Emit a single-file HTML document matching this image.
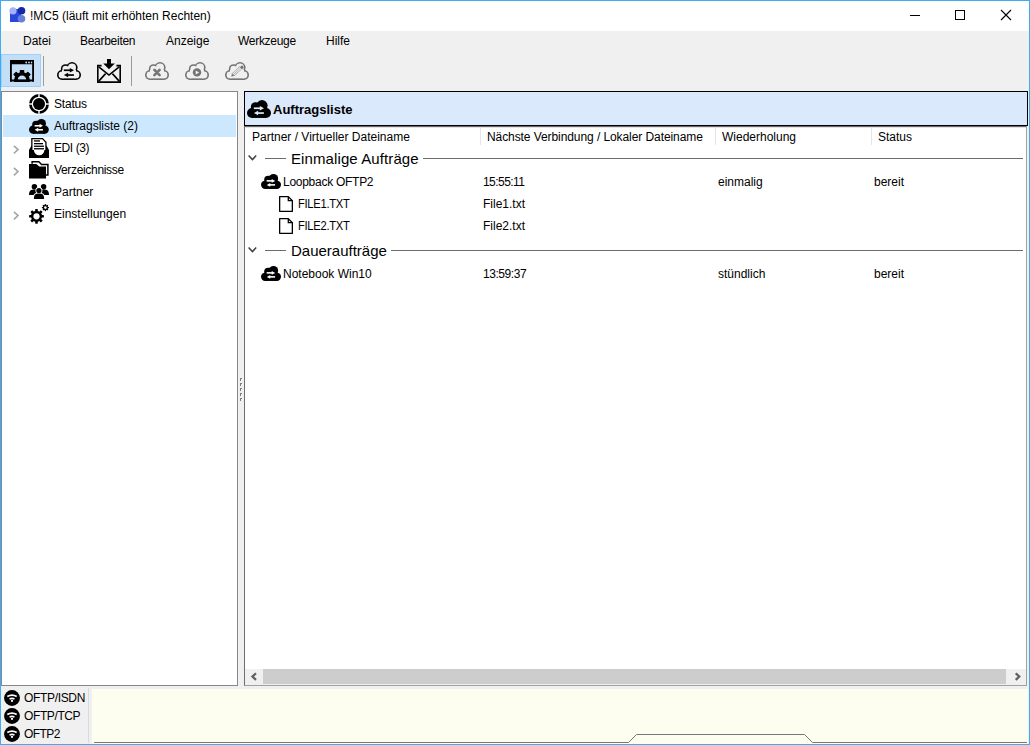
<!DOCTYPE html>
<html><head><meta charset="utf-8">
<style>
html,body{margin:0;padding:0;}
body{width:1030px;height:745px;position:relative;overflow:hidden;background:#f0f0f0;font-family:"Liberation Sans",sans-serif;font-size:12px;color:#000;}
.a{position:absolute;}
.t{position:absolute;white-space:nowrap;font-size:12px;line-height:14px;}
.g{position:absolute;white-space:nowrap;font-size:15px;line-height:17px;}
svg{position:absolute;overflow:visible;}
</style></head><body>

<div class="a" style="left:1px;top:1px;width:1028px;height:30px;background:#fff;"></div>
<svg style="left:9px;top:7px" width="17" height="16" viewBox="0 0 17 16">
  <rect x="1" y="2" width="11" height="13" fill="#2b46dc"/>
  <circle cx="12.5" cy="3.8" r="3.8" fill="#1428a8"/>
  <circle cx="12.5" cy="11.7" r="3.8" fill="#6a7fd8"/>
  <circle cx="4" cy="3.8" r="3.6" fill="#a4b2fc"/>
</svg>
<div class="t" style="left:30px;top:9px;">!MC5 (läuft mit erhöhten Rechten)</div>
<div class="a" style="left:910px;top:15px;width:10px;height:1px;background:#000"></div>
<div class="a" style="left:955px;top:10px;width:8px;height:8px;border:1px solid #000"></div>
<svg style="left:1001px;top:10px" width="10" height="10" viewBox="0 0 10 10"><path d="M0 0L10 10M10 0L0 10" stroke="#000" stroke-width="1.1"/></svg>
<div class="t" style="left:23px;top:34px;letter-spacing:0px">Datei</div>
<div class="t" style="left:80px;top:34px;letter-spacing:-0.28px">Bearbeiten</div>
<div class="t" style="left:166px;top:34px;letter-spacing:0px">Anzeige</div>
<div class="t" style="left:238px;top:34px;letter-spacing:-0.29px">Werkzeuge</div>
<div class="t" style="left:326px;top:34px;letter-spacing:0px">Hilfe</div>
<div class="a" style="left:1px;top:54px;width:38px;height:31px;background:#c4def5;border:1px solid #99d1ff;"></div>
<div class="a" style="left:43px;top:56px;width:1px;height:30px;background:#9a9a9a"></div>
<div class="a" style="left:131px;top:56px;width:1px;height:30px;background:#9a9a9a"></div>
<svg style="left:10px;top:60px;overflow:hidden" width="24" height="22" viewBox="0 0 24 22">
<rect x="0" y="0" width="24" height="4.2" rx="0.8" fill="#000"/>
<rect x="0" y="0" width="1.6" height="21.5" fill="#000"/>
<rect x="22.4" y="0" width="1.6" height="21.5" fill="#000"/>
<circle cx="16.2" cy="2.5" r="0.9" fill="#c4def5"/><circle cx="19" cy="2.5" r="0.9" fill="#c4def5"/><circle cx="21.7" cy="2.5" r="0.9" fill="#c4def5"/>
<circle cx="12" cy="20.3" r="8.0" fill="#000"/>
<rect x="9.8" y="9.9" width="4.4" height="4" rx="0.7" transform="rotate(-45 12 20.3)" fill="#000"/><rect x="9.8" y="9.9" width="4.4" height="4" rx="0.7" transform="rotate(0 12 20.3)" fill="#000"/><rect x="9.8" y="9.9" width="4.4" height="4" rx="0.7" transform="rotate(45 12 20.3)" fill="#000"/>
<rect x="0" y="0" width="1.6" height="21.5" fill="#000"/>
<rect x="22.4" y="0" width="1.6" height="21.5" fill="#000"/>
<path d="M7.8 19.8 A4.2 4.2 0 0 1 16.2 19.8 Z" fill="#c4def5"/>
<rect x="0" y="19.6" width="24" height="1.9" rx="0.5" fill="#000"/>
</svg>
<svg style="left:57px;top:62px" width="24" height="18" viewBox="0 0 24 18"><circle cx="15.0" cy="5.6" r="5.60" fill="#000"/><circle cx="8.6" cy="7.0" r="4.80" fill="#000"/><circle cx="5.0" cy="12.96" r="5.00" fill="#000"/><circle cx="19.0" cy="12.96" r="5.00" fill="#000"/><rect x="5" y="8" width="14" height="9.96" fill="#000"/><g transform="translate(0,0)"><circle cx="15.0" cy="5.6" r="4.00" fill="#f0f0f0"/><circle cx="8.6" cy="7.0" r="3.20" fill="#f0f0f0"/><circle cx="5.0" cy="12.96" r="3.40" fill="#f0f0f0"/><circle cx="19.0" cy="12.96" r="3.40" fill="#f0f0f0"/><rect x="5" y="8" width="14" height="8.36" fill="#f0f0f0"/></g><rect x="6.8" y="7.40" width="7" height="1.7" fill="#000"/><path d="M12.8 5.9 L17 8.25 L12.8 10.6 Z" fill="#000"/><rect x="10.4" y="12.20" width="6.5" height="1.7" fill="#000"/><path d="M11.1 10.75 L6.9 13.05 L11.1 15.35 Z" fill="#000"/></svg>
<svg style="left:97px;top:59px" width="24" height="24" viewBox="0 0 24 24">
<path d="M0.8 6.9 V23.1 H23.2 V6.9" fill="none" stroke="#000" stroke-width="1.6"/>
<path d="M0 6.6 H4.6 M19.4 6.6 H24" stroke="#000" stroke-width="1.6"/>
<path d="M1.8 7.8 L12 16.0 L22.2 7.8" fill="none" stroke="#000" stroke-width="1.6"/>
<path d="M1.6 22.4 L8.6 14.6 M22.4 22.4 L15.4 14.6" fill="none" stroke="#000" stroke-width="1.6"/>
<rect x="10" y="0" width="4" height="5.4" fill="#000"/>
<path d="M6.2 4.6 H17.8 L12 10.3 Z" fill="#000"/>
</svg>
<svg style="left:145px;top:62px" width="24" height="18" viewBox="0 0 24 18"><circle cx="15.0" cy="5.6" r="5.60" fill="#737373"/><circle cx="8.6" cy="7.0" r="4.80" fill="#737373"/><circle cx="5.0" cy="12.96" r="5.00" fill="#737373"/><circle cx="19.0" cy="12.96" r="5.00" fill="#737373"/><rect x="5" y="8" width="14" height="9.96" fill="#737373"/><g transform="translate(0,0)"><circle cx="15.0" cy="5.6" r="4.00" fill="#f0f0f0"/><circle cx="8.6" cy="7.0" r="3.20" fill="#f0f0f0"/><circle cx="5.0" cy="12.96" r="3.40" fill="#f0f0f0"/><circle cx="19.0" cy="12.96" r="3.40" fill="#f0f0f0"/><rect x="5" y="8" width="14" height="8.36" fill="#f0f0f0"/></g><path d="M9.4 7.9 L14.6 13.1 M14.6 7.9 L9.4 13.1" stroke="#737373" stroke-width="2.6" stroke-linecap="round"/></svg>
<svg style="left:185px;top:62px" width="24" height="18" viewBox="0 0 24 18"><circle cx="15.0" cy="5.6" r="5.60" fill="#737373"/><circle cx="8.6" cy="7.0" r="4.80" fill="#737373"/><circle cx="5.0" cy="12.96" r="5.00" fill="#737373"/><circle cx="19.0" cy="12.96" r="5.00" fill="#737373"/><rect x="5" y="8" width="14" height="9.96" fill="#737373"/><g transform="translate(0,0)"><circle cx="15.0" cy="5.6" r="4.00" fill="#f0f0f0"/><circle cx="8.6" cy="7.0" r="3.20" fill="#f0f0f0"/><circle cx="5.0" cy="12.96" r="3.40" fill="#f0f0f0"/><circle cx="19.0" cy="12.96" r="3.40" fill="#f0f0f0"/><rect x="5" y="8" width="14" height="8.36" fill="#f0f0f0"/></g><circle cx="12" cy="10.4" r="4.2" fill="#737373"/><path d="M10.7 8.5 L14.2 10.45 L10.7 12.4 Z" fill="#f0f0f0"/></svg>
<svg style="left:225px;top:62px" width="24" height="18" viewBox="0 0 24 18"><circle cx="15.0" cy="5.6" r="5.60" fill="#737373"/><circle cx="8.6" cy="7.0" r="4.80" fill="#737373"/><circle cx="5.0" cy="12.96" r="5.00" fill="#737373"/><circle cx="19.0" cy="12.96" r="5.00" fill="#737373"/><rect x="5" y="8" width="14" height="9.96" fill="#737373"/><g transform="translate(0,0)"><circle cx="15.0" cy="5.6" r="4.00" fill="#f0f0f0"/><circle cx="8.6" cy="7.0" r="3.20" fill="#f0f0f0"/><circle cx="5.0" cy="12.96" r="3.40" fill="#f0f0f0"/><circle cx="19.0" cy="12.96" r="3.40" fill="#f0f0f0"/><rect x="5" y="8" width="14" height="8.36" fill="#f0f0f0"/></g><path d="M9.06 13.9 L16.8 6.85 L14.8 4.63 L7.04 11.7 Z" fill="none" stroke="#737373" stroke-width="0.9" stroke-dasharray="0.9 0.6"/><path d="M8.05 12.8 L15.8 5.74" stroke="#737373" stroke-width="0.8" stroke-dasharray="0.9 0.6"/><path d="M6.2 14.5 L9.06 13.9 L7.04 11.7 Z" fill="#737373"/><path d="M17.2 7.2 L15.1 4.9 L16.4 3.7 Q17.2 3.2 17.9 3.9 L18.4 4.5 Q18.9 5.2 18.4 6 Z" fill="#737373"/></svg>
<div class="a" style="left:1px;top:91px;width:235px;height:593px;background:#fff;border:1px solid #828790;"></div>
<div class="a" style="left:3px;top:115px;width:233px;height:22px;background:#cce8ff"></div>
<div class="t" style="left:54px;top:97px;letter-spacing:-0.2px">Status</div>
<div class="t" style="left:54px;top:119px;letter-spacing:0px">Auftragsliste (2)</div>
<div class="t" style="left:54px;top:141px;letter-spacing:-0.4px">EDI (3)</div>
<div class="t" style="left:54px;top:163px;letter-spacing:-0.33px">Verzeichnisse</div>
<div class="t" style="left:54px;top:185px;letter-spacing:0px">Partner</div>
<div class="t" style="left:54px;top:207px;letter-spacing:0px">Einstellungen</div>
<svg style="left:13px;top:144.7px" width="7" height="10" viewBox="0 0 7 10"><path d="M0.9 0.9 L5 4.6 L0.9 8.3" fill="none" stroke="#a6a6a6" stroke-width="1.6"/></svg>
<svg style="left:13px;top:166.7px" width="7" height="10" viewBox="0 0 7 10"><path d="M0.9 0.9 L5 4.6 L0.9 8.3" fill="none" stroke="#a6a6a6" stroke-width="1.6"/></svg>
<svg style="left:13px;top:210.7px" width="7" height="10" viewBox="0 0 7 10"><path d="M0.9 0.9 L5 4.6 L0.9 8.3" fill="none" stroke="#a6a6a6" stroke-width="1.6"/></svg>
<svg style="left:29px;top:94px" width="20" height="20" viewBox="0 0 20 20">
<circle cx="10" cy="10" r="8.6" fill="none" stroke="#000" stroke-width="2.7"/>
<rect x="9.3" y="0" width="1.4" height="3" fill="#fff"/><rect x="9.3" y="17" width="1.4" height="3" fill="#fff"/>
<rect x="0" y="9.3" width="3" height="1.4" fill="#fff"/><rect x="17" y="9.3" width="3" height="1.4" fill="#fff"/>
<circle cx="10" cy="10" r="6" fill="#000"/>
</svg>
<svg style="left:29.1px;top:118.5px" width="19.8" height="14.85" viewBox="0 0 24 18"><circle cx="15.0" cy="5.6" r="5.60" fill="#000"/><circle cx="8.6" cy="7.0" r="4.80" fill="#000"/><circle cx="5.0" cy="12.96" r="5.00" fill="#000"/><circle cx="19.0" cy="12.96" r="5.00" fill="#000"/><rect x="5" y="8" width="14" height="9.96" fill="#000"/><rect x="6.8" y="7.30" width="7" height="1.9" fill="#fff"/><path d="M12.8 5.9 L17 8.25 L12.8 10.6 Z" fill="#fff"/><rect x="10.4" y="12.10" width="6.5" height="1.9" fill="#fff"/><path d="M11.1 10.75 L6.9 13.05 L11.1 15.35 Z" fill="#fff"/></svg>
<svg style="left:29px;top:138px" width="20" height="20" viewBox="0 0 20 20">
<path d="M2.2 0 H13.8 L17.6 3.9 V12.4 H2.2 Z" fill="#000"/>
<path d="M0 11.9 L2.4 7.7 H17.6 L20 11.9 V19.9 H0 Z" fill="#000"/>
<path d="M3.5 1.3 H13.3 L16.3 4.4 V11.9 H15.4 A5.25 5.3 0 0 1 4.9 11.9 H3.5 Z" fill="#fff"/>
<rect x="5" y="2.3" width="6" height="1.3" fill="#000"/>
<rect x="5" y="5" width="9" height="1.3" fill="#000"/>
<rect x="5" y="7.6" width="10" height="1.3" fill="#000"/>
<rect x="5" y="10.1" width="10" height="1.3" fill="#000"/>
</svg>
<svg style="left:29px;top:161px" width="20" height="18" viewBox="0 0 20 18">
<path d="M3.1 2.8 V0.8 H9.9 L12.5 3.5 H18.9 V14.1 H16.8" fill="none" stroke="#000" stroke-width="1.5"/>
<path d="M0 3.1 H7.4 L10.3 5.5 H17 V17.6 H0 Z" fill="#000"/>
</svg>
<svg style="left:29px;top:184px" width="20" height="16" viewBox="0 0 20 16">
<circle cx="5.4" cy="2.8" r="2.75" fill="#000"/><circle cx="14.6" cy="2.8" r="2.75" fill="#000"/>
<path d="M0 11 C0 6.5 2 5.4 5.4 5.4 C8.8 5.4 10.5 6.5 10.5 11 Z" fill="#000"/>
<path d="M9.5 11 C9.5 6.5 11.2 5.4 14.6 5.4 C18 5.4 20 6.5 20 11 Z" fill="#000"/>
<circle cx="9.9" cy="6.5" r="3.5" fill="#fff"/>
<path d="M3.9 15.6 C3.9 9.4 6 8.7 9.9 8.7 C13.8 8.7 16.1 9.4 16.1 15.6 Z" fill="#fff"/>
<circle cx="9.9" cy="6.5" r="2.6" fill="#000"/>
<path d="M4.9 15 C4.9 10.2 6.5 9.5 9.9 9.5 C13.3 9.5 15.1 10.2 15.1 15 Z" fill="#000"/>
</svg>
<svg style="left:27px;top:202px" width="24" height="24" viewBox="0 0 24 24">
<circle cx="9.5" cy="14.3" r="5.6" fill="#000"/><rect x="8.20" y="6.90" width="2.6" height="2.60" rx="0.4" transform="rotate(0.0 9.5 14.3)" fill="#000"/><rect x="8.20" y="6.90" width="2.6" height="2.60" rx="0.4" transform="rotate(45.0 9.5 14.3)" fill="#000"/><rect x="8.20" y="6.90" width="2.6" height="2.60" rx="0.4" transform="rotate(90.0 9.5 14.3)" fill="#000"/><rect x="8.20" y="6.90" width="2.6" height="2.60" rx="0.4" transform="rotate(135.0 9.5 14.3)" fill="#000"/><rect x="8.20" y="6.90" width="2.6" height="2.60" rx="0.4" transform="rotate(180.0 9.5 14.3)" fill="#000"/><rect x="8.20" y="6.90" width="2.6" height="2.60" rx="0.4" transform="rotate(225.0 9.5 14.3)" fill="#000"/><rect x="8.20" y="6.90" width="2.6" height="2.60" rx="0.4" transform="rotate(270.0 9.5 14.3)" fill="#000"/><rect x="8.20" y="6.90" width="2.6" height="2.60" rx="0.4" transform="rotate(315.0 9.5 14.3)" fill="#000"/><circle cx="9.5" cy="14.3" r="3.1" fill="#fff"/>
<circle cx="18.4" cy="5.6" r="2.6" fill="#000"/><rect x="17.75" y="2.00" width="1.3" height="1.80" rx="0.4" transform="rotate(0.0 18.4 5.6)" fill="#000"/><rect x="17.75" y="2.00" width="1.3" height="1.80" rx="0.4" transform="rotate(45.0 18.4 5.6)" fill="#000"/><rect x="17.75" y="2.00" width="1.3" height="1.80" rx="0.4" transform="rotate(90.0 18.4 5.6)" fill="#000"/><rect x="17.75" y="2.00" width="1.3" height="1.80" rx="0.4" transform="rotate(135.0 18.4 5.6)" fill="#000"/><rect x="17.75" y="2.00" width="1.3" height="1.80" rx="0.4" transform="rotate(180.0 18.4 5.6)" fill="#000"/><rect x="17.75" y="2.00" width="1.3" height="1.80" rx="0.4" transform="rotate(225.0 18.4 5.6)" fill="#000"/><rect x="17.75" y="2.00" width="1.3" height="1.80" rx="0.4" transform="rotate(270.0 18.4 5.6)" fill="#000"/><rect x="17.75" y="2.00" width="1.3" height="1.80" rx="0.4" transform="rotate(315.0 18.4 5.6)" fill="#000"/><circle cx="18.4" cy="5.6" r="1.3" fill="#fff"/>
</svg>
<div class="a" style="left:244px;top:91px;width:783px;height:595px;background:#fff;border-left:1px solid #6e6e6e;border-right:1px solid #a0a0a0;border-bottom:1px solid #a0a0a0;box-sizing:border-box;"></div>
<div class="a" style="left:244px;top:91px;width:784px;height:35px;background:#dae9fb;border:1px solid #000;box-sizing:border-box;"></div>
<div class="a" style="left:245px;top:126px;width:781px;height:1px;background:#6a6a6a"></div>
<div class="a" style="left:245px;top:127px;width:781px;height:1px;background:#e2e2e2"></div>
<svg style="left:247.1px;top:99.84px" width="24" height="18.00" viewBox="0 0 24 18"><circle cx="15.0" cy="5.6" r="5.60" fill="#000"/><circle cx="8.6" cy="7.0" r="4.80" fill="#000"/><circle cx="5.0" cy="12.96" r="5.00" fill="#000"/><circle cx="19.0" cy="12.96" r="5.00" fill="#000"/><rect x="5" y="8" width="14" height="9.96" fill="#000"/><rect x="6.8" y="7.40" width="7" height="1.7" fill="#dae9fb"/><path d="M12.8 5.9 L17 8.25 L12.8 10.6 Z" fill="#dae9fb"/><rect x="10.4" y="12.20" width="6.5" height="1.7" fill="#dae9fb"/><path d="M11.1 10.75 L6.9 13.05 L11.1 15.35 Z" fill="#dae9fb"/></svg>
<div class="a" style="left:273px;top:102px;white-space:nowrap;font-weight:bold;font-size:13px;line-height:15px;">Auftragsliste</div>
<div class="t" style="left:252px;top:130px;">Partner / Virtueller Dateiname</div>
<div class="a" style="left:480px;top:128px;width:1px;height:17px;background:#e5e5e5"></div>
<div class="t" style="left:487px;top:130px;letter-spacing:-0.08px">Nächste Verbindung / Lokaler Dateiname</div>
<div class="a" style="left:715px;top:128px;width:1px;height:17px;background:#e5e5e5"></div>
<div class="t" style="left:722px;top:130px;">Wiederholung</div>
<div class="a" style="left:871px;top:128px;width:1px;height:17px;background:#e5e5e5"></div>
<div class="t" style="left:878px;top:130px;">Status</div>
<svg style="left:248px;top:155px" width="9" height="6" viewBox="0 0 9 6"><path d="M0.6 0.6 L4.4 4.6 L8.2 0.6" fill="none" stroke="#404040" stroke-width="1.5"/></svg>
<div class="a" style="left:265px;top:158px;width:21px;height:1px;background:#6d6d6d"></div>
<div class="g" style="left:291px;top:150px;letter-spacing:0.1px">Einmalige Aufträge</div>
<div class="a" style="left:423px;top:158px;width:600px;height:1px;background:#6d6d6d"></div>
<svg style="left:261px;top:174.0px" width="20" height="15.00" viewBox="0 0 24 18"><circle cx="15.0" cy="5.6" r="5.60" fill="#000"/><circle cx="8.6" cy="7.0" r="4.80" fill="#000"/><circle cx="5.0" cy="12.96" r="5.00" fill="#000"/><circle cx="19.0" cy="12.96" r="5.00" fill="#000"/><rect x="5" y="8" width="14" height="9.96" fill="#000"/><rect x="6.8" y="7.30" width="7" height="1.9" fill="#fff"/><path d="M12.8 5.9 L17 8.25 L12.8 10.6 Z" fill="#fff"/><rect x="10.4" y="12.10" width="6.5" height="1.9" fill="#fff"/><path d="M11.1 10.75 L6.9 13.05 L11.1 15.35 Z" fill="#fff"/></svg>
<div class="t" style="left:283px;top:175px;letter-spacing:-0.27px">Loopback OFTP2</div>
<div class="t" style="left:483px;top:175px;letter-spacing:-0.55px">15:55:11</div>
<div class="t" style="left:718px;top:175px;">einmalig</div>
<div class="t" style="left:874px;top:175px;">bereit</div>
<svg style="left:279px;top:196px" width="14" height="16" viewBox="0 0 14 16"><path d="M0.65 0.65 H9.3 L13.35 4.7 V15.35 H0.65 Z" fill="#fff" stroke="#000" stroke-width="1.3" stroke-linejoin="round"/><path d="M9.3 0.65 V4.7 H13.35" fill="none" stroke="#000" stroke-width="1.3"/></svg>
<div class="t" style="left:298px;top:197px;letter-spacing:-0.3px;transform:scaleX(0.93);transform-origin:0 0">FILE1.TXT</div>
<div class="t" style="left:483px;top:197px;">File1.txt</div>
<svg style="left:279px;top:218px" width="14" height="16" viewBox="0 0 14 16"><path d="M0.65 0.65 H9.3 L13.35 4.7 V15.35 H0.65 Z" fill="#fff" stroke="#000" stroke-width="1.3" stroke-linejoin="round"/><path d="M9.3 0.65 V4.7 H13.35" fill="none" stroke="#000" stroke-width="1.3"/></svg>
<div class="t" style="left:298px;top:219px;letter-spacing:-0.3px;transform:scaleX(0.93);transform-origin:0 0">FILE2.TXT</div>
<div class="t" style="left:483px;top:219px;">File2.txt</div>
<svg style="left:248px;top:247px" width="9" height="6" viewBox="0 0 9 6"><path d="M0.6 0.6 L4.4 4.6 L8.2 0.6" fill="none" stroke="#404040" stroke-width="1.5"/></svg>
<div class="a" style="left:265px;top:250px;width:21px;height:1px;background:#6d6d6d"></div>
<div class="g" style="left:291px;top:242px;">Daueraufträge</div>
<div class="a" style="left:391px;top:250px;width:632px;height:1px;background:#6d6d6d"></div>
<svg style="left:261px;top:266.0px" width="20" height="15.00" viewBox="0 0 24 18"><circle cx="15.0" cy="5.6" r="5.60" fill="#000"/><circle cx="8.6" cy="7.0" r="4.80" fill="#000"/><circle cx="5.0" cy="12.96" r="5.00" fill="#000"/><circle cx="19.0" cy="12.96" r="5.00" fill="#000"/><rect x="5" y="8" width="14" height="9.96" fill="#000"/><rect x="6.8" y="7.30" width="7" height="1.9" fill="#fff"/><path d="M12.8 5.9 L17 8.25 L12.8 10.6 Z" fill="#fff"/><rect x="10.4" y="12.10" width="6.5" height="1.9" fill="#fff"/><path d="M11.1 10.75 L6.9 13.05 L11.1 15.35 Z" fill="#fff"/></svg>
<div class="t" style="left:283px;top:267px;">Notebook Win10</div>
<div class="t" style="left:483px;top:267px;letter-spacing:-0.45px">13:59:37</div>
<div class="t" style="left:718px;top:267px;">stündlich</div>
<div class="t" style="left:874px;top:267px;">bereit</div>
<div class="a" style="left:240px;top:378px;width:2px;height:1px;background:#7c7c7c"></div><div class="a" style="left:240px;top:379px;width:1px;height:2px;background:#7c7c7c"></div>
<div class="a" style="left:240px;top:383px;width:2px;height:1px;background:#7c7c7c"></div><div class="a" style="left:240px;top:384px;width:1px;height:2px;background:#7c7c7c"></div>
<div class="a" style="left:240px;top:388px;width:2px;height:1px;background:#7c7c7c"></div><div class="a" style="left:240px;top:389px;width:1px;height:2px;background:#7c7c7c"></div>
<div class="a" style="left:240px;top:393px;width:2px;height:1px;background:#7c7c7c"></div><div class="a" style="left:240px;top:394px;width:1px;height:2px;background:#7c7c7c"></div>
<div class="a" style="left:240px;top:398px;width:2px;height:1px;background:#7c7c7c"></div><div class="a" style="left:240px;top:399px;width:1px;height:2px;background:#7c7c7c"></div>
<div class="a" style="left:245px;top:669px;width:781px;height:16px;background:#f0f0f0"></div>
<div class="a" style="left:263px;top:669px;width:743px;height:15px;background:#cdcdcd"></div>
<svg style="left:250px;top:672px" width="8" height="9" viewBox="0 0 8 9"><path d="M6 1.3 L2.4 4.6 L6 7.9" fill="none" stroke="#606060" stroke-width="2.2"/></svg>
<svg style="left:1014px;top:672px" width="8" height="9" viewBox="0 0 8 9"><path d="M1.7 1.3 L5.3 4.6 L1.7 7.9" fill="none" stroke="#606060" stroke-width="2.2"/></svg>
<div class="a" style="left:88px;top:688px;width:1px;height:55px;background:#dadada"></div>
<div class="a" style="left:92px;top:689px;width:936px;height:55px;background:#fefef0"></div>
<svg style="left:92px;top:689px" width="936" height="55" viewBox="0 0 936 55"><path d="M2 53.5 H536.5 L544.5 45.5 H712.5 L720.5 53.5 H935" fill="none" stroke="#787878" stroke-width="1"/></svg>
<svg style="left:4px;top:690px" width="16" height="16" viewBox="0 0 16 16"><circle cx="8" cy="8" r="7.95" fill="#000"/><path d="M3.3 6.6 A9 9 0 0 1 12.7 6.6" fill="none" stroke="#fff" stroke-width="1.8"/><path d="M5.5 9.1 A5 5 0 0 1 10.5 9.1" fill="none" stroke="#fff" stroke-width="1.6"/><path d="M6.9 10.1 H9.1 L8.7 11.9 H7.3 Z" fill="#fff"/></svg>
<div class="t" style="left:24px;top:691px;letter-spacing:-0.33px">OFTP/ISDN</div>
<svg style="left:4px;top:708px" width="16" height="16" viewBox="0 0 16 16"><circle cx="8" cy="8" r="7.95" fill="#000"/><path d="M3.3 6.6 A9 9 0 0 1 12.7 6.6" fill="none" stroke="#fff" stroke-width="1.8"/><path d="M5.5 9.1 A5 5 0 0 1 10.5 9.1" fill="none" stroke="#fff" stroke-width="1.6"/><path d="M6.9 10.1 H9.1 L8.7 11.9 H7.3 Z" fill="#fff"/></svg>
<div class="t" style="left:24px;top:709px;letter-spacing:-0.39px">OFTP/TCP</div>
<svg style="left:4px;top:726px" width="16" height="16" viewBox="0 0 16 16"><circle cx="8" cy="8" r="7.95" fill="#000"/><path d="M3.3 6.6 A9 9 0 0 1 12.7 6.6" fill="none" stroke="#fff" stroke-width="1.8"/><path d="M5.5 9.1 A5 5 0 0 1 10.5 9.1" fill="none" stroke="#fff" stroke-width="1.6"/><path d="M6.9 10.1 H9.1 L8.7 11.9 H7.3 Z" fill="#fff"/></svg>
<div class="t" style="left:24px;top:727px;letter-spacing:-0.55px">OFTP2</div>
<div class="a" style="left:0;top:0;width:1030px;height:745px;box-sizing:border-box;border:1px solid #40abf0;"></div>
</body></html>
